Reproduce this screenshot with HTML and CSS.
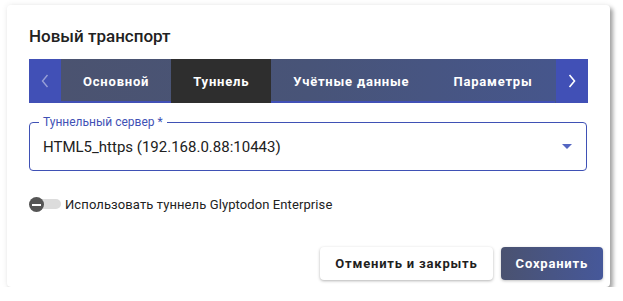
FILE: index.html
```html
<!DOCTYPE html>
<html lang="ru">
<head>
<meta charset="utf-8">
<title>Новый транспорт</title>
<link rel="stylesheet" href="styles.css">
</head>
<body>
<div class="dialog">
  <h2 class="title">Новый транспорт</h2>
  <div class="tabs">
    <div class="arrow arrow-disabled">
      <svg width="8" height="14" viewBox="0 0 8 14"><path d="M6.5 1 L1.5 7 L6.5 13" fill="none" stroke="#ffffff" stroke-width="1.4"/></svg>
    </div>
    <div class="tab-strip">
      <div class="tab">Основной</div>
      <div class="tab tab-active">Туннель</div>
      <div class="tab">Учётные данные</div>
      <div class="tab">Параметры</div>
    </div>
    <div class="arrow">
      <svg width="8" height="14" viewBox="0 0 8 14"><path d="M1.5 1 L6.5 7 L1.5 13" fill="none" stroke="#ffffff" stroke-width="1.6"/></svg>
    </div>
  </div>
  <div class="field">
    <span class="field-label">Туннельный сервер *</span>
    <span class="field-value">HTML5_https (192.168.0.88:10443)</span>
    <span class="caret"></span>
  </div>
  <div class="toggle-row">
    <span class="toggle"><span class="track"></span><span class="thumb"><span class="minus"></span></span></span>
    <span class="toggle-label">Использовать туннель Glyptodon Enterprise</span>
  </div>
  <div class="footer">
    <button class="btn btn-cancel">Отменить и закрыть</button>
    <button class="btn btn-save">Сохранить</button>
  </div>
</div>
</body>
</html>
```
FILE: styles.css
```css
html, body {
  margin: 0;
  padding: 0;
  background: #ffffff;
  font-family: Roboto, "Noto Sans", "Liberation Sans", sans-serif;
}
body {
  padding: 5px 0 0 7px;
}
.dialog {
  width: 603px;
  height: 282px;
  box-sizing: border-box;
  background: #ffffff;
  border-radius: 4px;
  box-shadow: 3px 3px 4px rgba(0,0,0,0.35), 0 0 6px rgba(0,0,0,0.08);
  display: flex;
  flex-direction: column;
  padding: 21px 0 0 22px;
}
.title {
  margin: 0;
  font-size: 17px;
  line-height: 20px;
  font-weight: 500;
  color: #212121;
}
.tabs {
  margin-top: 13px;
  width: 559px;
  height: 44px;
  display: flex;
  background: #4150b6;
}
.arrow {
  width: 32px;
  flex: none;
  display: flex;
  align-items: center;
  justify-content: center;
  background: #4150b6;
}
.arrow-disabled svg {
  opacity: 0.45;
}
.tab-strip {
  flex: 1;
  display: flex;
  overflow: hidden;
  background: linear-gradient(90deg, #4b5370 0%, #485478 50%, #46568c 100%);
}
.tab {
  flex: none;
  height: 44px;
  box-sizing: border-box;
  padding: 2px 22px 0 22px;
  display: flex;
  align-items: center;
  color: #ffffff;
  font-size: 13px;
  font-weight: 700;
  letter-spacing: 0.8px;
  border-bottom: 2px solid #4150b6;
}
.tab-active {
  background: #2e2e2e;
  border-bottom-color: #2e2e2e;
}
.field {
  position: relative;
  margin-top: 19px;
  width: 558px;
  height: 49px;
  box-sizing: border-box;
  border: 1.5px solid #3f51b5;
  border-radius: 4px;
  display: flex;
  align-items: center;
  padding: 0 13px;
}
.field-label {
  position: absolute;
  left: 9px;
  top: -8px;
  padding: 0 4px;
  background: #ffffff;
  font-size: 12px;
  line-height: 14px;
  color: #3f51b5;
}
.field-value {
  flex: 1;
  font-size: 15px;
  color: #212121;
  padding-top: 1px;
}
.caret {
  width: 0;
  height: 0;
  border-left: 5px solid transparent;
  border-right: 5px solid transparent;
  border-top: 5px solid #5466c2;
  margin-right: 1px;
}
.toggle-row {
  margin-top: 23px;
  height: 20px;
  display: flex;
  align-items: center;
}
.toggle {
  position: relative;
  width: 32px;
  height: 16px;
  flex: none;
}
.track {
  position: absolute;
  left: 2px;
  top: 3px;
  width: 30px;
  height: 10px;
  border-radius: 5px;
  background: #dcdcdc;
}
.thumb {
  position: absolute;
  left: 0;
  top: 1px;
  width: 15px;
  height: 15px;
  border-radius: 50%;
  background: #555555;
  display: flex;
  align-items: center;
  justify-content: center;
}
.minus {
  width: 9px;
  height: 2px;
  background: #ffffff;
}
.toggle-label {
  margin-left: 4px;
  font-size: 13px;
  letter-spacing: 0.1px;
  color: #222222;
}
.footer {
  margin-top: auto;
  display: flex;
  justify-content: flex-end;
  gap: 8px;
  padding: 0 7px 7px 0;
}
.btn {
  height: 33px;
  border: none;
  border-radius: 4px;
  font-family: Roboto, "Noto Sans", "Liberation Sans", sans-serif;
  font-size: 13px;
  font-weight: 700;
  letter-spacing: 0.8px;
  padding: 0 15px;
  white-space: nowrap;
  cursor: pointer;
}
.btn-cancel {
  background: #ffffff;
  color: #1f1f1f;
  box-shadow: 0 1px 3px rgba(0,0,0,0.3);
}
.btn-save {
  color: #ffffff;
  background: linear-gradient(90deg, #4a5270 0%, #46589a 100%);
  box-shadow: 0 1px 3px rgba(0,0,0,0.25);
}
```
